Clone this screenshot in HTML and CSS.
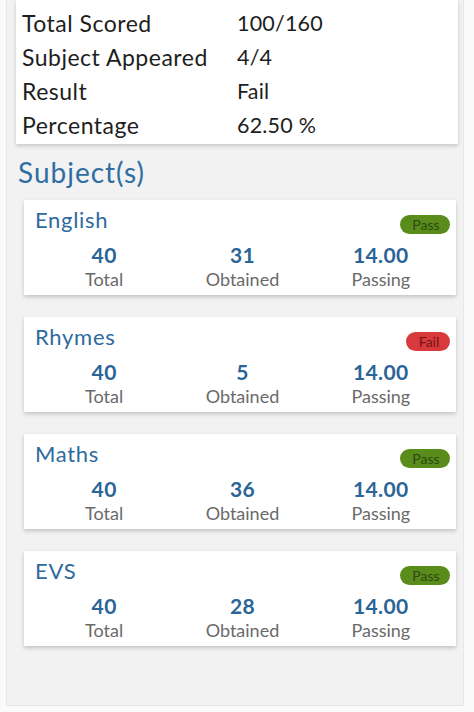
FILE: index.html
```html
<!DOCTYPE html>
<html>
<head>
<meta charset="utf-8">
<link rel="stylesheet" href="styles.css">
</head>
<body>
<div class="frame">
  <div class="summary">
    <div class="row"><span class="label">Total Scored</span><span class="value">100/160</span></div>
    <div class="row"><span class="label">Subject Appeared</span><span class="value">4/4</span></div>
    <div class="row"><span class="label">Result</span><span class="value">Fail</span></div>
    <div class="row"><span class="label">Percentage</span><span class="value">62.50 %</span></div>
  </div>
  <h2 class="heading">Subject(s)</h2>
  <div class="cards">
    <div class="card">
      <div class="card-head"><span class="name">English</span><span class="badge pass">Pass</span></div>
      <div class="stats">
        <div class="stat"><span class="num">40</span><span class="cap">Total</span></div>
        <div class="stat"><span class="num">31</span><span class="cap">Obtained</span></div>
        <div class="stat"><span class="num">14.00</span><span class="cap">Passing</span></div>
      </div>
    </div>
    <div class="card">
      <div class="card-head"><span class="name">Rhymes</span><span class="badge fail">Fail</span></div>
      <div class="stats">
        <div class="stat"><span class="num">40</span><span class="cap">Total</span></div>
        <div class="stat"><span class="num">5</span><span class="cap">Obtained</span></div>
        <div class="stat"><span class="num">14.00</span><span class="cap">Passing</span></div>
      </div>
    </div>
    <div class="card">
      <div class="card-head"><span class="name">Maths</span><span class="badge pass">Pass</span></div>
      <div class="stats">
        <div class="stat"><span class="num">40</span><span class="cap">Total</span></div>
        <div class="stat"><span class="num">36</span><span class="cap">Obtained</span></div>
        <div class="stat"><span class="num">14.00</span><span class="cap">Passing</span></div>
      </div>
    </div>
    <div class="card">
      <div class="card-head"><span class="name">EVS</span><span class="badge pass">Pass</span></div>
      <div class="stats">
        <div class="stat"><span class="num">40</span><span class="cap">Total</span></div>
        <div class="stat"><span class="num">28</span><span class="cap">Obtained</span></div>
        <div class="stat"><span class="num">14.00</span><span class="cap">Passing</span></div>
      </div>
    </div>
  </div>
</div>
</body>
</html>
```
FILE: styles.css
```css
html, body {
  margin: 0;
  padding: 0;
}
body {
  background: #fafafa;
  font-family: Lato, "Open Sans", sans-serif;
  width: 474px;
  height: 712px;
  overflow: hidden;
}
.frame {
  margin: 0 10px 0 6px;
  height: 706px;
  background: #f2f2f2;
  border-left: 1px solid #e8e8e8;
  border-right: 1px solid #e8e8e8;
  border-bottom: 1px solid #e8e8e8;
  box-sizing: border-box;
  padding: 0 0 0 9px;
}
.summary {
  width: 442px;
  background: #fff;
  box-shadow: 0 2px 4px rgba(0,0,0,0.18);
  padding: 6px 0 2px 6px;
  box-sizing: border-box;
}
.row {
  display: flex;
  height: 34px;
  align-items: center;
  color: #1e1e1e;
}
.label {
  width: 215px;
  font-size: 23px;
  letter-spacing: 0.5px;
}
.value {
  font-size: 21.5px;
  letter-spacing: 0.2px;
}
.heading {
  margin: 11px 0 11px 2px;
  font-size: 28px;
  line-height: 34px;
  font-weight: 400;
  letter-spacing: 1px;
  color: #2f6da2;
}
.cards {
  display: flex;
  flex-direction: column;
  gap: 22px;
  margin-left: 8px;
  width: 432px;
}
.card {
  background: #fff;
  box-shadow: 0 2px 4px rgba(0,0,0,0.2);
  padding: 6px 6px 4px 11px;
  height: 95px;
  box-sizing: border-box;
}
.card-head {
  display: flex;
  justify-content: space-between;
  align-items: flex-end;
  height: 28px;
}
.name {
  font-size: 22px;
  line-height: 28px;
  letter-spacing: 0.7px;
  color: #2e6a9e;
}
.badge {
  width: 50px;
  height: 19px;
  border-radius: 10px;
  font-size: 14px;
  line-height: 19px;
  text-align: center;
  box-sizing: border-box;
  padding-left: 2px;
}
.badge.pass {
  background: #5a8c1b;
  color: #2b4a0f;
}
.badge.fail {
  background: #d8393b;
  color: #751414;
  width: 44px;
}
.stats {
  display: grid;
  grid-template-columns: 1fr 1fr 1fr;
  margin-top: 9px;
}
.stat {
  display: flex;
  flex-direction: column;
  align-items: center;
}
.num {
  font-size: 21px;
  line-height: 24px;
  font-weight: 700;
  letter-spacing: 0.4px;
  color: #2b6496;
}
.cap {
  font-size: 18px;
  line-height: 24px;
  color: #6a6a6a;
}
```
